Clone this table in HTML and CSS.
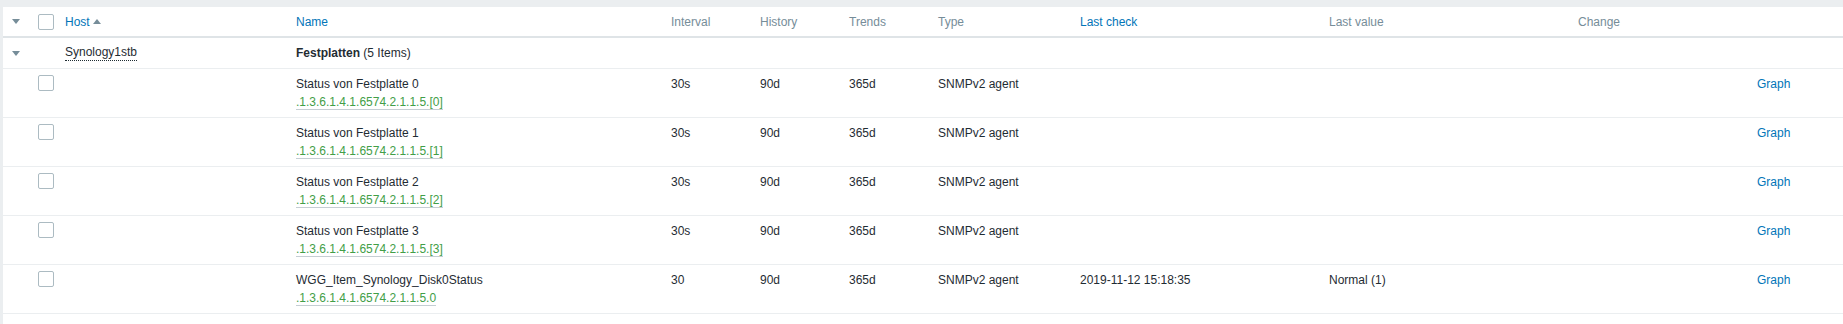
FILE: index.html
```html
<!DOCTYPE html>
<html>
<head>
<meta charset="utf-8">
<link rel="stylesheet" href="styles.css">
</head>
<body>
<div class="page">
  <div class="panel">
    <div class="row head">
      <div class="cell c-arrow"><span class="tri-down"></span></div>
      <div class="cell"><span class="cb"></span></div>
      <div class="cell"><a class="sort">Host</a><span class="tri-up"></span></div>
      <div class="cell"><a class="sort">Name</a></div>
      <div class="cell">Interval</div>
      <div class="cell">History</div>
      <div class="cell">Trends</div>
      <div class="cell">Type</div>
      <div class="cell"><a class="sort">Last check</a></div>
      <div class="cell">Last value</div>
      <div class="cell">Change</div>
      <div class="cell"></div>
    </div>
    <div class="row group">
      <div class="cell c-arrow"><span class="tri-down"></span></div>
      <div class="cell"></div>
      <div class="cell"><span class="host">Synology1stb</span></div>
      <div class="cell"><b>Festplatten</b>&nbsp;(5 Items)</div>
    </div>
    <div class="row item">
      <div class="cell"></div>
      <div class="cell"><span class="cb"></span></div>
      <div class="cell"></div>
      <div class="cell"><div class="nm">Status von Festplatte 0</div><span class="oid">.1.3.6.1.4.1.6574.2.1.1.5.[0]</span></div>
      <div class="cell">30s</div><div class="cell">90d</div><div class="cell">365d</div><div class="cell">SNMPv2 agent</div>
      <div class="cell"></div><div class="cell"></div><div class="cell"></div>
      <div class="cell"><a class="lnk">Graph</a></div>
    </div>
    <div class="row item">
      <div class="cell"></div>
      <div class="cell"><span class="cb"></span></div>
      <div class="cell"></div>
      <div class="cell"><div class="nm">Status von Festplatte 1</div><span class="oid">.1.3.6.1.4.1.6574.2.1.1.5.[1]</span></div>
      <div class="cell">30s</div><div class="cell">90d</div><div class="cell">365d</div><div class="cell">SNMPv2 agent</div>
      <div class="cell"></div><div class="cell"></div><div class="cell"></div>
      <div class="cell"><a class="lnk">Graph</a></div>
    </div>
    <div class="row item">
      <div class="cell"></div>
      <div class="cell"><span class="cb"></span></div>
      <div class="cell"></div>
      <div class="cell"><div class="nm">Status von Festplatte 2</div><span class="oid">.1.3.6.1.4.1.6574.2.1.1.5.[2]</span></div>
      <div class="cell">30s</div><div class="cell">90d</div><div class="cell">365d</div><div class="cell">SNMPv2 agent</div>
      <div class="cell"></div><div class="cell"></div><div class="cell"></div>
      <div class="cell"><a class="lnk">Graph</a></div>
    </div>
    <div class="row item">
      <div class="cell"></div>
      <div class="cell"><span class="cb"></span></div>
      <div class="cell"></div>
      <div class="cell"><div class="nm">Status von Festplatte 3</div><span class="oid">.1.3.6.1.4.1.6574.2.1.1.5.[3]</span></div>
      <div class="cell">30s</div><div class="cell">90d</div><div class="cell">365d</div><div class="cell">SNMPv2 agent</div>
      <div class="cell"></div><div class="cell"></div><div class="cell"></div>
      <div class="cell"><a class="lnk">Graph</a></div>
    </div>
    <div class="row item">
      <div class="cell"></div>
      <div class="cell"><span class="cb"></span></div>
      <div class="cell"></div>
      <div class="cell"><div class="nm">WGG_Item_Synology_Disk0Status</div><span class="oid">.1.3.6.1.4.1.6574.2.1.1.5.0</span></div>
      <div class="cell">30</div><div class="cell">90d</div><div class="cell">365d</div><div class="cell">SNMPv2 agent</div>
      <div class="cell">2019-11-12 15:18:35</div><div class="cell">Normal (1)</div><div class="cell"></div>
      <div class="cell"><a class="lnk">Graph</a></div>
    </div>
  </div>
</div>
</body>
</html>
```

FILE: styles.css
```css
html, body {
  margin: 0;
  padding: 0;
}
body {
  background: #ebeef0;
  font-family: "Liberation Sans", Arial, sans-serif;
  font-size: 12px;
  color: #1f2c33;
}
.page {
  padding: 7px 0 0 3px;
  height: 324px;
  box-sizing: border-box;
  overflow: hidden;
}
.panel {
  background: #ffffff;
  height: 100%;
}
.row {
  display: grid;
  grid-template-columns: 30px 27px 231px 375px 89px 89px 89px 142px 249px 249px 179px 1fr;
  box-sizing: border-box;
  border-bottom: 1px solid #ebeef0;
  line-height: 14px;
}
.cell {
  padding-left: 5px;
  white-space: nowrap;
  min-width: 0;
}
.c-arrow {
  padding-left: 9px;
}
.head {
  height: 31px;
  border-bottom: 2px solid #dfe4e7;
  color: #768d99;
  align-items: center;
}
.head .cell {
  display: flex;
  align-items: center;
}
.sort {
  color: #0275b8;
}
.group {
  height: 31px;
  align-items: center;
}
.group .cell {
  display: flex;
  align-items: center;
}
.item {
  height: 49px;
  align-items: start;
  padding-top: 8px;
}
.tri-down {
  display: inline-block;
  width: 0;
  height: 0;
  border-left: 4px solid transparent;
  border-right: 4px solid transparent;
  border-top: 5px solid #768d99;
}
.tri-up {
  display: inline-block;
  width: 0;
  height: 0;
  margin-left: 3px;
  border-left: 4px solid transparent;
  border-right: 4px solid transparent;
  border-bottom: 5px solid #768d99;
}
.cb {
  display: block;
  width: 14px;
  height: 14px;
  border: 1px solid #acbbc2;
  border-radius: 2px;
  background: #fff;
}
.item .cb {
  margin-top: -2px;
}
.host {
  border-bottom: 1px dotted #1f2c33;
  padding-bottom: 1px;
}
.nm {
  margin-bottom: 4px;
}
.oid {
  display: inline-block;
  color: #429e47;
  border-bottom: 1px solid #c5ced3;
}
.lnk {
  color: #0275b8;
}
```
